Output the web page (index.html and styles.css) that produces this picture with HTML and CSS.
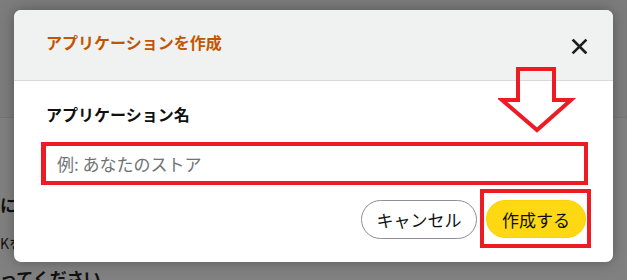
FILE: index.html
```html
<!DOCTYPE html>
<html lang="ja">
<head>
<meta charset="utf-8">
<link rel="stylesheet" href="styles.css">
</head>
<body>
<div class="page">
  <div class="page-header"></div>
  <div class="page-body">
    <h2 class="page-title">にアプリケーションを追加</h2>
    <p class="page-text">Kを使用してアプリケーションを作成します</p>
    <p class="page-text page-text-bold">ってください</p>
  </div>
</div>

<div class="dialog">
  <div class="dialog-header">
    <h1 class="dialog-title">アプリケーションを作成</h1>
    <button class="close-btn" aria-label="閉じる">
      <svg width="17" height="17" viewBox="0 0 17 17"><path d="M2.5 2.5 L14.5 14.5 M14.5 2.5 L2.5 14.5" stroke="#1f1f1f" stroke-width="2.6" stroke-linecap="square" fill="none"/></svg>
    </button>
  </div>
  <div class="dialog-body">
    <label class="field-label">アプリケーション名</label>
    <div class="input-box"><span class="placeholder">例: あなたのストア</span></div>
    <div class="footer">
      <button class="btn btn-cancel">キャンセル</button>
      <div class="highlight">
        <button class="btn btn-create">作成する</button>
      </div>
    </div>
  </div>
</div>

<svg class="arrow" width="78" height="70" viewBox="0 0 78 70">
  <polygon points="20,4 56,4 56,35 73,35 39,65 4,35 20,35" fill="none" stroke="#ed1c24" stroke-width="4" stroke-linejoin="miter"/>
</svg>
</body>
</html>
```

FILE: styles.css
```css
* { box-sizing: border-box; }
html, body {
  margin: 0;
  padding: 0;
}
body {
  width: 627px;
  height: 280px;
  overflow: hidden;
  position: relative;
  background: #808080;
  font-family: "Noto Sans CJK JP", "Noto Sans", sans-serif;
}
.page {
  width: 627px;
  height: 280px;
}
.page-header {
  height: 118px;
  border-bottom: 1px solid #747474;
  background: #7c7c7c;
}
.page-body {
  padding-left: 0;
}
.page-title {
  margin: 74px 0 0 0;
  font-size: 17px;
  line-height: 26px;
  font-weight: 700;
  color: #101010;
  white-space: nowrap;
}
.page-text {
  margin: 14px 0 0 0;
  font-size: 14px;
  line-height: 22px;
  color: #111;
  white-space: nowrap;
}
.page-text-bold {
  margin-top: 13px;
  font-size: 17px;
  font-weight: 700;
}

.dialog {
  position: absolute;
  left: 14px;
  top: 10px;
  width: 599px;
  height: 252px;
  background: #fff;
  border-radius: 7px;
  overflow: hidden;
  box-shadow: 0 0 14px rgba(0,0,0,0.3);
}
.dialog-header {
  height: 71px;
  background: #f0f2f2;
  border-bottom: 1px solid #d5d9d9;
  display: flex;
  justify-content: space-between;
  align-items: flex-start;
  padding: 20px 25px 0 32px;
}
.dialog-title {
  margin: 0;
  font-size: 16px;
  line-height: 24px;
  font-weight: 700;
  color: #c45500;
}
.close-btn {
  margin-top: 8px;
  padding: 0;
  border: 0;
  background: none;
  width: 17px;
  height: 17px;
  display: flex;
}
.dialog-body {
  padding: 21px 25px 0 27px;
}
.field-label {
  display: block;
  margin-left: 5px;
  font-size: 16px;
  line-height: 24px;
  font-weight: 700;
  color: #0f1111;
}
.input-box {
  margin-top: 16px;
  height: 43px;
  border: 4px solid #ed1c24;
  border-left-width: 5px;
  display: flex;
  align-items: center;
  padding-left: 11px;
}
.placeholder {
  font-size: 17px;
  color: #6f7373;
}
.footer {
  margin-top: 4px;
  margin-right: -3px;
  display: flex;
  justify-content: flex-end;
  align-items: center;
}
.btn {
  font-family: "Noto Sans CJK JP", "Noto Sans", sans-serif;
  font-size: 17px;
  color: #0f1111;
  border-radius: 20px;
  padding: 0;
  line-height: 1;
}
.btn-cancel {
  width: 116px;
  height: 39px;
  background: #fff;
  border: 1px solid #8d9096;
  margin-right: 3px;
  margin-top: 1px;
}
.highlight {
  border: 4px solid #ed1c24;
  padding: 7px 1px 6px 2px;
  display: flex;
}
.btn-create {
  width: 100px;
  height: 38px;
  background: #ffd814;
  border: 1px solid #fcd200;
}
.arrow {
  position: absolute;
  left: 498px;
  top: 65px;
}
```
